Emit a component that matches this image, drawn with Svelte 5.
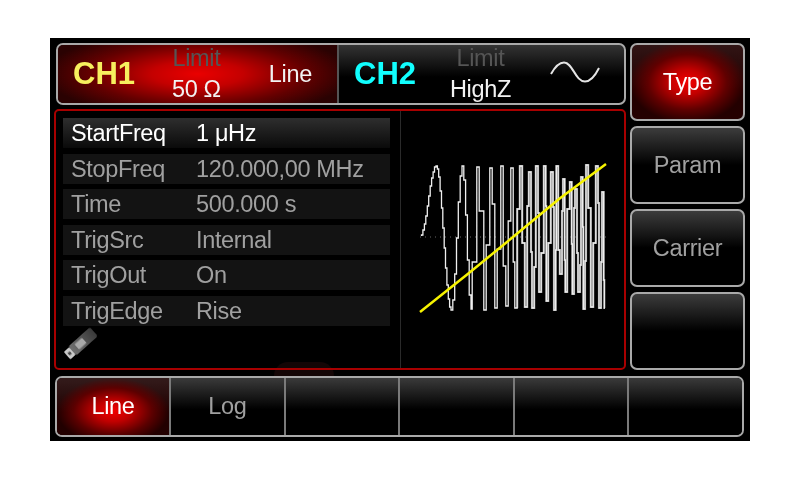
<script>
	const rows = [
		{ label: 'StartFreq', value: '1 μHz', active: true },
		{ label: 'StopFreq', value: '120.000,00 MHz' },
		{ label: 'Time', value: '500.000 s' },
		{ label: 'TrigSrc', value: 'Internal' },
		{ label: 'TrigOut', value: 'On' },
		{ label: 'TrigEdge', value: 'Rise' }
	];
	const sideKeys = ['Type', 'Param', 'Carrier', ''];
	const bottomKeys = ['Line', 'Log', '', '', '', ''];

	// peaks and troughs of the sweep, read off the trace
	const extremes = [
		[11, 87], [27, 17], [42, 161], [53, 17], [62, 160], [69, 18], [76, 161], [82, 19], [87, 159],
		[93, 17], [98, 157], [103, 19], [107, 159], [112, 17], [117, 158], [121, 23], [124, 159],
		[128, 17], [131, 143], [136, 17], [138, 152], [143, 23], [146, 161], [148, 17], [152, 125],
		[155, 30], [157, 143], [162, 33], [164, 145], [167, 40], [170, 143], [173, 28], [175, 160],
		[178, 16], [183, 158], [188, 17], [191, 159], [194, 43], [196, 159]
	];
	// where the sample between two extremes lands, off the middle
	const midOffsets = [-34, 12, 30, -16, 24, -28, 6];

	// sample and hold, so the trace comes out in steps like the DAC output
	function steppedPoints(from) {
		const pts = [];
		for (let i = from; i < extremes.length - 1; i++) {
			const [x0, y0] = extremes[i];
			const [x1, y1] = extremes[i + 1];
			const dx = x1 - x0;
			if (dx <= 8) {
				const w = Math.min(1.2, dx / 3);
				const mid = Math.round((y0 + y1) / 2 + midOffsets[i % midOffsets.length]);
				pts.push(`${x0 + w},${y0}`, `${x0 + w},${mid}`, `${x1 - w},${mid}`, `${x1 - w},${y1}`, `${x1},${y1}`);
				continue;
			}
			const steps = dx > 12 ? Math.round(dx / 1.4) : Math.round(dx / 2);
			let prev = y0;
			for (let s = 1; s <= steps; s++) {
				const t = s / steps;
				const x = (x0 + dx * t).toFixed(1);
				const y = Math.round(y0 + (y1 - y0) * (1 - Math.cos(Math.PI * t)) / 2);
				pts.push(`${x},${prev}`, `${x},${y}`);
				prev = y;
			}
		}
		return pts.join(' ');
	}
	const sweep = steppedPoints(0);
	const sweepBody = steppedPoints(12);
</script>

<div class="screen">
	<div class="upper">
		<div class="left">
			<header class="channels">
				<section class="channel on">
					<b class="ch yellow">CH1</b>
					<div class="stack"><span class="limit">Limit</span><span>50 Ω</span></div>
					<span class="mode">Line</span>
				</section>
				<section class="channel">
					<b class="ch cyan">CH2</b>
					<div class="stack two"><span class="limit">Limit</span><span>HighZ</span></div>
					<svg class="sine" viewBox="0 0 50 24" width="50" height="24" aria-hidden="true">
						<path d="M1 13 C6 4 10 1.5 14 1.5 C23 1.5 25 20.5 35 20.5 C41 20.5 45 15 49 7" />
					</svg>
				</section>
			</header>
			<main class="panel">
				<div class="params">
					{#each rows as row}
						<div class="row" class:active={row.active}>
							<span class="label">{row.label}</span>
							<span>{row.value}</span>
						</div>
					{/each}
					<svg class="usb" viewBox="0 0 36 36" width="36" height="36" aria-hidden="true">
						<defs>
							<linearGradient id="stick" x1="0" y1="0" x2="1" y2="0">
								<stop offset="0" stop-color="#707070" />
								<stop offset="1" stop-color="#3a3a3a" />
							</linearGradient>
						</defs>
						<g transform="rotate(-42 18 18)" class="usb-body">
							<rect x="9" y="12" width="29" height="12" rx="2" fill="url(#stick)" />
							<rect x="15" y="14.5" width="10" height="7" rx="1" fill="#a8a8a8" />
							<rect x="2" y="13" width="7" height="10" rx="1" fill="#c8c8c8" />
							<rect x="4" y="16.5" width="3" height="3" fill="#444" />
						</g>
					</svg>
				</div>
				<div class="trace">
					<svg viewBox="0 0 210 180" width="210" height="180" aria-hidden="true">
						<line class="zero" x1="11" y1="88" x2="197" y2="88" />
						<polyline class="sweep-body" points={sweepBody} />
						<polyline class="sweep" points={sweep} />
						<polyline class="ramp" points="11,163 60,124 104,88 150,50 197,15" />
					</svg>
				</div>
				<div class="smudge" aria-hidden="true"></div>
			</main>
		</div>
		<aside class="side">
			{#each sideKeys as key, i}
				<div class="key" class:lit={i === 0}>{key}</div>
			{/each}
		</aside>
	</div>
	<footer class="tabs">
		{#each bottomKeys as key, i}
			<div class="tab" class:lit={i === 0}>{key}</div>
		{/each}
	</footer>
</div>

<style>
	:global(body) { background: #fff; }
	.screen {
		width: 700px;
		height: 403px;
		margin: 38px 0 0 50px;
		padding: 5px 5px 0 4px;
		box-sizing: border-box;
		background: #000;
		font-family: "Liberation Sans", Arial, sans-serif;
		font-size: 23.5px;
		letter-spacing: -0.35px;
		color: #a0a0a0;
		filter: blur(0.45px);
	}
	.upper { display: flex; gap: 4px; height: 327px; }
	.left { width: 572px; display: flex; flex-direction: column; gap: 4px; }
	.channels {
		height: 62px;
		margin-left: 2px;
		box-sizing: border-box;
		display: flex;
		border: 2px solid #a9a9a9;
		border-radius: 7px;
		overflow: hidden;
		background: linear-gradient(#333 0, #000 55%);
	}
	.channel { flex: 1; display: flex; align-items: center; color: #f2f2f2; }
	.channel.on {
		flex: 0 0 281px;
		border-right: 2px solid #555;
		box-sizing: border-box;
		background: radial-gradient(ellipse 55% 75% at 50% 50%, #ea0000 0, #c40000 30%, #640000 70%, #2a0202 100%);
	}
	.ch { font-size: 31px; letter-spacing: 0; margin-left: 15px; width: 99px; }
	.yellow { color: #f7ef5e; }
	.cyan { color: #1ff; }
	.stack { display: flex; flex-direction: column; align-items: center; line-height: 31px; margin-top: -1px; }
	.stack.two { margin-left: -3px; }
	.limit { color: #555; }
	.mode { margin-left: 48px; }
	.sine { margin-left: 39px; margin-top: -2px; }
	.sine path { fill: none; stroke: #e4e4e4; stroke-width: 2; }
	.panel {
		flex: 1;
		position: relative;
		box-sizing: border-box;
		display: flex;
		border: 2px solid #a80000;
		border-radius: 5px;
	}
	.params {
		width: 345px;
		box-sizing: border-box;
		padding: 7px 10px 0 7px;
		display: flex;
		flex-direction: column;
		gap: 5.5px;
		border-right: 1px solid #2a2a2a;
	}
	.row {
		height: 30px;
		flex: none;
		box-sizing: border-box;
		padding: 1px 0 0 8px;
		display: flex;
		align-items: center;
		background: #131313;
	}
	.row.active { color: #fff; background: linear-gradient(#2e2e2e, #0a0a0a); }
	.label { width: 125px; }
	.usb { margin: -4px 0 0 -2px; flex: none; }
	.usb-body { filter: blur(0.7px); }
	.trace { flex: 1; padding: 38px 0 0 8px; }
	.trace svg { display: block; }
	.zero { stroke: #666; stroke-width: 1; stroke-dasharray: 1 4; }
	.sweep-body { fill: none; stroke: #808080; stroke-width: 2.2; }
	.sweep { fill: none; stroke: #efefef; stroke-width: 1.3; stroke-linejoin: miter; }
	.ramp { fill: none; stroke: #f6f200; stroke-width: 2.5; }
	.smudge {
		position: absolute;
		left: 218px;
		bottom: -8px;
		width: 60px;
		height: 14px;
		border-radius: 30px 30px 0 0;
		background: #140606;
		z-index: -1;
	}
	.side { flex: 1; display: flex; flex-direction: column; gap: 5px; }
	.key {
		flex: 1;
		display: flex;
		align-items: center;
		justify-content: center;
		border: 2px solid #a9a9a9;
		border-radius: 7px;
		background: linear-gradient(#3c3c3c 0, #000 50%);
	}
	.key.lit, .tab.lit { color: #fff; }
	.key.lit {
		background:
			radial-gradient(ellipse 52% 55% at 50% 50%, #f40000 0, #c40000 30%, #600000 68%, rgba(40, 0, 0, 0.7) 100%),
			linear-gradient(#444, #140000 60%, #1c0000);
	}
	.tabs {
		height: 61px;
		margin: 6px 1px 0 1px;
		box-sizing: border-box;
		display: grid;
		grid-template-columns: 112px repeat(5, 1fr);
		border: 2px solid #a9a9a9;
		border-radius: 7px;
		overflow: hidden;
	}
	.tab {
		display: flex;
		align-items: center;
		justify-content: center;
		border-left: 2px solid #7a7a7a;
		background: linear-gradient(#3a3a3a 0, #000 55%);
	}
	.tab:first-child { border-left: 0; }
	.tab.lit {
		background:
			radial-gradient(ellipse 50% 58% at 50% 58%, #f40000 0, #c00000 32%, #5c0000 70%, rgba(40, 0, 0, 0.6) 100%),
			linear-gradient(#444, #140000 60%, #1c0000);
	}
</style>
